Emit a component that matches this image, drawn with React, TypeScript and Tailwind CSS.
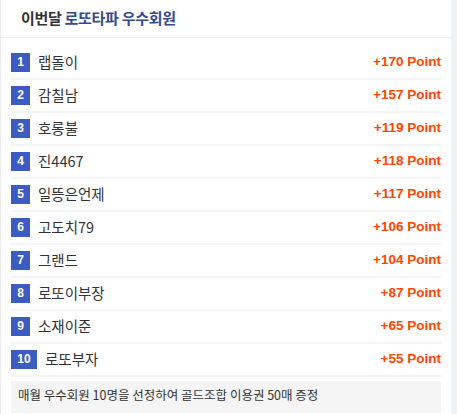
const members = [
  { rank: 1, name: "랩돌이", point: 170 },
  { rank: 2, name: "감칠남", point: 157 },
  { rank: 3, name: "호롱불", point: 119 },
  { rank: 4, name: "진4467", point: 118 },
  { rank: 5, name: "일뜽은언제", point: 117 },
  { rank: 6, name: "고도치79", point: 106 },
  { rank: 7, name: "그랜드", point: 104 },
  { rank: 8, name: "로또이부장", point: 87 },
  { rank: 9, name: "소재이준", point: 65 },
  { rank: 10, name: "로또부자", point: 55 },
];

const App = () => {
  return (
    <div className="flex h-[414px] w-[457px] overflow-hidden bg-white">
      <div className="flex w-[451px] flex-col border-l border-[#ececec] bg-white">
        <div className="flex h-[38px] items-center border-b border-[#f0f0f0] pl-[20px] pb-[1px]">
          <h2 className="text-[15px] font-bold tracking-[-0.3px] text-[#333]" style={{ fontFamily: '"Noto Sans CJK KR", sans-serif' }}>
            이번달 <span className="text-[#34498f]">로또타파 우수회원</span>
          </h2>
        </div>

        <ul className="mt-[9px] flex flex-col px-[10px]">
          {members.map((m) => (
            <li
              key={m.rank}
              className="flex h-[33px] items-center border-b-2 border-[#f4f4f4] pb-[1px]"
            >
              <span
                className={`flex h-[19px] items-center justify-center bg-[#3d5cc3] text-[12px] font-bold text-white ${
                  m.rank === 10 ? "w-[26px]" : "w-[19px]"
                }`}
                style={{ fontFamily: '"Liberation Sans", sans-serif' }}
              >
                {m.rank}
              </span>
              <span
                className="ml-[8px] text-[14.5px] text-[#333]"
                style={{ fontFamily: '"Noto Sans CJK KR", sans-serif' }}
              >
                {m.name}
              </span>
              <span
                className="ml-auto text-[13.5px] font-bold text-[#ff4500]"
                style={{ fontFamily: '"Liberation Sans", sans-serif' }}
              >
                +{m.point} Point
              </span>
            </li>
          ))}
        </ul>

        <div className="mx-[10px] mt-[4px] flex h-[32px] items-start bg-[#f5f5f5] pl-[7px] pt-[5px]">
          <p className="text-[12.5px] text-[#333]" style={{ fontFamily: '"Noto Sans CJK KR", sans-serif' }}>
            매월 우수회원 10명을 선정하여 골드조합 이용권 50매 증정
          </p>
        </div>
      </div>
      <div className="flex-1 bg-[#f1f2f4]" />
    </div>
  );
};

export default App;
